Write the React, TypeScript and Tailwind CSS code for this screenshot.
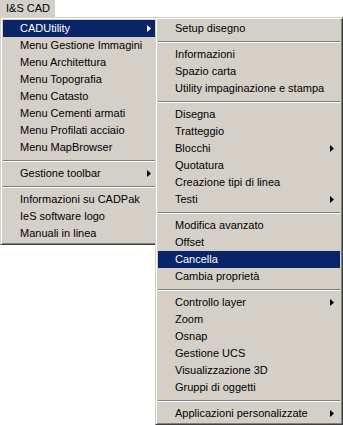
import React from "react"

type Voce = { label: string; sub?: boolean; sel?: boolean } | "sep"

const menuPrincipale: Voce[] = [
  { label: "CADUtility", sub: true, sel: true },
  { label: "Menu Gestione Immagini" },
  { label: "Menu Architettura" },
  { label: "Menu Topografia" },
  { label: "Menu Catasto" },
  { label: "Menu Cementi armati" },
  { label: "Menu Profilati acciaio" },
  { label: "Menu MapBrowser" },
  "sep",
  { label: "Gestione toolbar", sub: true },
  "sep",
  { label: "Informazioni su CADPak" },
  { label: "IeS software logo" },
  { label: "Manuali in linea" },
]

const menuUtility: Voce[] = [
  { label: "Setup disegno" },
  "sep",
  { label: "Informazioni" },
  { label: "Spazio carta" },
  { label: "Utility impaginazione e stampa" },
  "sep",
  { label: "Disegna" },
  { label: "Tratteggio" },
  { label: "Blocchi", sub: true },
  { label: "Quotatura" },
  { label: "Creazione tipi di linea" },
  { label: "Testi", sub: true },
  "sep",
  { label: "Modifica avanzato" },
  { label: "Offset" },
  { label: "Cancella", sel: true },
  { label: "Cambia proprietà" },
  "sep",
  { label: "Controllo layer", sub: true },
  { label: "Zoom" },
  { label: "Osnap" },
  { label: "Gestione UCS" },
  { label: "Visualizzazione 3D" },
  { label: "Gruppi di oggetti" },
  "sep",
  { label: "Applicazioni personalizzate", sub: true },
]

function Freccia({ bianca }: { bianca?: boolean }) {
  return (
    <svg width="4" height="7" viewBox="0 0 4 7" className="block">
      <path d="M0 0 L4 3.5 L0 7 Z" fill={bianca ? "#ffffff" : "#000000"} />
    </svg>
  )
}

function Menu({ voci, arrowGap }: { voci: Voce[]; arrowGap: string }) {
  return (
    <div className="flex flex-col bg-[#d4d0c8] border border-t-[#d4d0c8] border-l-[#d4d0c8] border-r-[#404040] border-b-[#404040] p-[2px] shadow-[inset_1px_1px_0_#ffffff,inset_-1px_-1px_0_#808080]">
      {voci.map((v, i) =>
        v === "sep" ? (
          <div key={i} className="h-[9px] flex items-center">
            <div className="w-full h-[2px] border-t border-t-[#808080] border-b border-b-white" />
          </div>
        ) : (
          <div
            key={i}
            className={
              v.sel
                ? "h-[17px] flex items-center pl-[17px] bg-[#0a246a] text-white"
                : "h-[17px] flex items-center pl-[17px] text-black"
            }
          >
            <span className="whitespace-nowrap leading-none">{v.label}</span>
            {v.sub && (
              <span className={`ml-auto ${arrowGap}`}>
                <Freccia bianca={v.sel} />
              </span>
            )}
          </div>
        )
      )}
    </div>
  )
}

export default function App() {
  return (
    <div className="w-[343px] h-[425px] bg-white overflow-hidden text-[11px] font-['Liberation_Sans',Arial,sans-serif]">
      <div className="flex">
        <div className="w-[55px] h-[17px] bg-[#d4d0c8] flex items-center pl-[6px] text-black">
          I&amp;S CAD
        </div>
      </div>
      <div className="flex items-start">
        <div className="w-[158px] shrink-0">
          <Menu voci={menuPrincipale} arrowGap="mr-[4px]" />
        </div>
        <div className="w-[188px] shrink-0 -ml-[3px] relative z-10">
          <Menu voci={menuUtility} arrowGap="mr-[6px]" />
        </div>
      </div>
    </div>
  )
}
